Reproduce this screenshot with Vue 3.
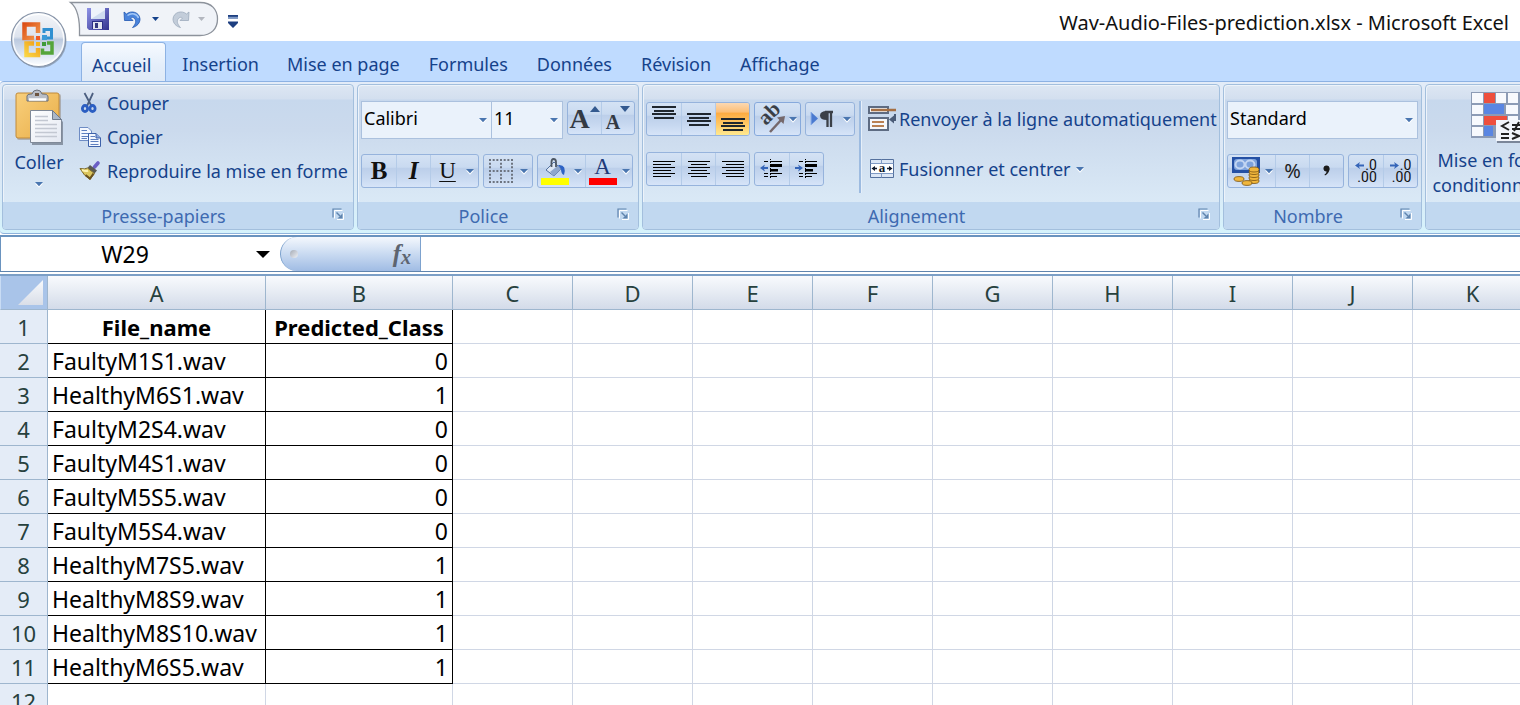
<script setup>
import { ref, h } from 'vue'

const tabs = ['Accueil', 'Insertion', 'Mise en page', 'Formules', 'Données', 'Révision', 'Affichage']
const activeTab = ref('Accueil')
const font = ref('Calibri')
const size = ref('11')
const format = ref('Standard')
const cellRef = ref('W29')
const formula = ref('')

const columns = ['A', 'B', 'C', 'D', 'E', 'F', 'G', 'H', 'I', 'J', 'K']
const emptyColumns = columns.slice(2)
const records = [
  ['FaultyM1S1.wav', 0],
  ['HealthyM6S1.wav', 1],
  ['FaultyM2S4.wav', 0],
  ['FaultyM4S1.wav', 0],
  ['FaultyM5S5.wav', 0],
  ['FaultyM5S4.wav', 0],
  ['HealthyM7S5.wav', 1],
  ['HealthyM8S9.wav', 1],
  ['HealthyM8S10.wav', 1],
  ['HealthyM6S5.wav', 1]
]

const Caret = () =>
  h('svg', { class: 'caret', width: 8, height: 5, viewBox: '0 0 8 5', 'aria-hidden': 'true' }, [
    h('path', { d: 'M0 1.5 H8 L4 5.8Z', fill: '#fff' }),
    h('path', { d: 'M0 0 H8 L4 4.2Z', fill: '#4a76b0' })
  ])

const Launcher = (props) =>
  h('button', { class: 'launcher', type: 'button', 'aria-label': props.label }, [
    h('svg', { width: 12, height: 12, viewBox: '0 0 12 12' }, [
      h('path', { d: 'M2.5 10.5 V2.5 H10.5 M11.5 5 V11.5 H5', stroke: '#fff', fill: 'none' }),
      h('path', { d: 'M1 9.5 V1 H9.5', stroke: '#5f83ad', fill: 'none', 'stroke-width': 1.2 }),
      h('path', { d: 'M4.5 4.5 L8 8', stroke: '#5f83ad', fill: 'none', 'stroke-width': 1.4 }),
      h('path', { d: 'M10.5 5.5 V10.5 H5.5 L8 8Z', fill: '#5f83ad' })
    ])
  ])
Launcher.props = ['label']

const Lines = (props) =>
  h('svg', { width: 26, height: 32, viewBox: '0 0 26 32', 'aria-hidden': 'true' },
    props.rows.map(([x, y, w]) => h('rect', { x, y, width: w, height: props.thick || 1, fill: props.thick ? '#1f262e' : '#000' })))
Lines.props = ['rows', 'thick']

const stackFrom = (top) => [[1, top, 24], [3, top + 4, 20], [1, top + 7, 24], [3, top + 11, 20]]
const vTop = stackFrom(3)
const vMid = stackFrom(10)
const vBottom = stackFrom(15)
const hLeft = [[2, 8, 22], [2, 11, 18], [2, 14, 22], [2, 17, 18], [2, 20, 22], [2, 23, 18]]
const hCenter = [[2, 8, 22], [5, 11, 16], [2, 14, 22], [5, 17, 16], [2, 20, 22], [5, 23, 16]]
const hRight = [[2, 8, 22], [6, 11, 18], [2, 14, 22], [6, 17, 18], [2, 20, 22], [6, 23, 18]]
</script>

<template>
  <div class="excel">
    <header class="titlebar">
      <button class="office" type="button" aria-label="Bouton Office">
        <svg width="58" height="58" viewBox="0 0 58 58">
          <defs>
            <linearGradient id="orb" x1="0" y1="0" x2="0" y2="1">
              <stop offset="0" stop-color="#f4f6fa" />
              <stop offset=".45" stop-color="#dde3ed" />
              <stop offset=".5" stop-color="#bccadf" />
              <stop offset=".8" stop-color="#dfe8f4" />
              <stop offset="1" stop-color="#ffffff" />
            </linearGradient>
            <linearGradient id="or" gradientUnits="userSpaceOnUse" x1="12" y1="11" x2="30" y2="28">
              <stop offset="0" stop-color="#d9440f" /><stop offset="1" stop-color="#f5a050" />
            </linearGradient>
            <linearGradient id="ye" gradientUnits="userSpaceOnUse" x1="14" y1="46" x2="28" y2="30">
              <stop offset="0" stop-color="#fbdc4a" /><stop offset="1" stop-color="#f09a14" />
            </linearGradient>
          </defs>
          <circle cx="29.5" cy="30" r="27" fill="#6f7b8c" opacity=".55" />
          <circle cx="28.5" cy="28.5" r="27" fill="url(#orb)" stroke="#8794a8" stroke-width="1.2" />
          <circle cx="28.5" cy="28.5" r="25.3" fill="none" stroke="#fff" stroke-width="1.4" opacity=".85" />
          <g fill="none">
            <path d="M24 27 H14.500 V13.500 H28 V22" stroke="url(#or)" stroke-width="4.500" />
            <path d="M34 22 V18.500 H41.500 V27 H37" stroke="#2f8fd0" stroke-width="3" />
            <path d="M24 32.500 H16.500 V44 H28 V37" stroke="url(#ye)" stroke-width="4.500" />
            <path d="M37 32 H42 V42 H32.500 V37.500" stroke="#55a53a" stroke-width="3.500" />
          </g>
          <rect x="26" y="25" width="4" height="4" fill="#ef5a24" />
          <rect x="32" y="24" width="5" height="5" fill="#3b9ad8" />
          <rect x="26" y="31" width="4" height="4" fill="#f7b51c" />
          <rect x="32" y="31" width="4" height="4" fill="#3f9a3a" />
        </svg>
      </button>
      <div class="qat">
        <svg class="qat-shape" width="149" height="37" viewBox="0 0 149 37" aria-hidden="true">
          <path d="M.5 2.500 H130 C142 2.500 147.500 10 147.500 19 C147.500 28 142 35.500 130 35.500 H9.500 C10 20 8 8 .5 2.500Z" fill="#f0f3f8" stroke="#8d939c" stroke-width="1.300" />
        </svg>
        <button class="plain" type="button" aria-label="Enregistrer">
          <svg width="22" height="22" viewBox="0 0 22 22">
            <defs><linearGradient id="fl" x1="0" y1="0" x2="1" y2="1"><stop offset="0" stop-color="#8f93e6" /><stop offset="1" stop-color="#33338f" /></linearGradient></defs>
            <path d="M0 0 H22 V22 H2 L0 20Z" fill="url(#fl)" />
            <rect x="4" y="0" width="14" height="11" fill="#eef3fb" />
            <path d="M4 11 L18 2 V11Z" fill="#cfdcf0" />
            <rect x="5" y="13" width="11" height="8" fill="#2c2f86" />
            <rect x="6" y="14" width="9" height="7" fill="#e3e6f1" />
            <rect x="8" y="15" width="3" height="5" fill="#34387f" />
          </svg>
        </button>
        <button class="plain undo" type="button" aria-label="Annuler">
          <svg width="18" height="18" viewBox="0 0 18 18">
            <path d="M1 2 L3.500 4 C8 0 16.500 2 17 9 C17 13 14 16.500 9.500 17.500 C13 14 13.500 10.500 11.500 8.500 C10 7 8.500 7 7.500 8 L10 10.500 L1.500 10.500Z" fill="#4a84dc" stroke="#1f55b0" stroke-width=".8" />
            <path d="M4.500 5.500 C8.500 2.500 14 3.500 15.500 8" fill="none" stroke="#a4c8f6" stroke-width="1.500" />
          </svg>
        </button>
        <button class="plain" type="button" aria-label="Liste des annulations">
          <svg width="7" height="4" viewBox="0 0 7 4"><path d="M0 0 H7 L3.500 4Z" fill="#15428b" /></svg>
        </button>
        <button class="plain redo" type="button" aria-label="Rétablir">
          <svg width="18" height="18" viewBox="0 0 18 18">
            <path d="M17 2 L14.500 4 C10 0 1.500 2 1 9 C1 13 4 16.500 8.500 17.500 C5 14 4.500 10.500 6.500 8.500 C8 7 9.500 7 10.500 8 L8 10.500 L16.500 10.500Z" fill="#c3cdda" stroke="#9dabbd" stroke-width=".8" />
          </svg>
        </button>
        <button class="plain" type="button" aria-label="Liste des rétablissements">
          <svg width="7" height="4" viewBox="0 0 7 4"><path d="M0 0 H7 L3.500 4Z" fill="#b3b7bf" /></svg>
        </button>
        <button class="plain customize" type="button" aria-label="Personnaliser la barre d'outils">
          <svg width="10" height="13" viewBox="0 0 10 13"><path d="M0 0 H10 V3.500 H0Z M0 6.500 H10 V8 L5 13 L0 8Z" fill="#1e3f80" /><path d="M0 1.800 H10 V3.500 H0Z" fill="#7d99c6" /></svg>
        </button>
      </div>
      <h1>Wav-Audio-Files-prediction.xlsx - Microsoft Excel</h1>
    </header>

    <nav class="tabs" aria-label="Ruban">
      <button v-for="t in tabs" :key="t" type="button" class="tab" :class="{ active: t === activeTab }" @click="activeTab = t">{{ t }}</button>
    </nav>

    <div class="ribbon">
      <section class="group clipboard" aria-label="Presse-papiers">
        <div class="body">
          <button class="plain paste" type="button">
            <svg width="52" height="56" viewBox="-2 0 52 56">
              <defs>
                <linearGradient id="cb" x1="0" y1="0" x2="1" y2="1"><stop offset="0" stop-color="#f8cf7c" /><stop offset="1" stop-color="#e9ae48" /></linearGradient>
                <linearGradient id="pg" x1="0" y1="0" x2="1" y2="1"><stop offset="0" stop-color="#fff" /><stop offset="1" stop-color="#e3e8f2" /></linearGradient>
              </defs>
              <rect x="2" y="5" width="44" height="46" rx="2" fill="#8a7a68" opacity=".45" />
              <rect x="1" y="4" width="43" height="45" rx="2" fill="url(#cb)" stroke="#c08a3a" />
              <path d="M12 12 V7 Q12 5 16 5 H17 Q18 1 22 1 Q26 1 27 5 H28 Q33 5 33 8 V12Z" fill="#b9bec7" stroke="#6a6e77" />
              <path d="M14 10.500 H31" stroke="#fff" stroke-width="2.500" />
              <rect x="20" y="4" width="4" height="3" fill="#6c5540" />
              <path d="M17 24 H40 L48 33 V56 H17Z" fill="#6c7686" opacity=".7" />
              <path d="M15.500 21.500 H37.500 L46.500 30.500 V53.500 H15.500Z" fill="url(#pg)" stroke="#7f8998" />
              <path d="M37.500 21.500 L46.500 30.500 H37.500Z" fill="#aab7c9" stroke="#6f7b8d" />
              <path d="M20 27.500 H33 M20 31.500 H33 M20 35.500 H42 M20 39.500 H42 M20 43.500 H42 M20 47.500 H42" stroke="#c3c8d2" stroke-width="1.500" />
            </svg>
            <span>Coller</span>
            <Caret />
          </button>
          <div class="stack">
            <button class="plain item" type="button">
              <svg width="22" height="22" viewBox="0 0 22 22">
                <path d="M5.500 1 L12.500 14 M14 1 L8 14" stroke="#4c5f80" stroke-width="1.800" fill="none" />
                <ellipse cx="6" cy="16.500" rx="2.600" ry="3" fill="none" stroke="#2b5ec2" stroke-width="2.800" />
                <ellipse cx="13.500" cy="16.500" rx="2.600" ry="3" fill="none" stroke="#2b5ec2" stroke-width="2.800" />
              </svg>Couper
            </button>
            <button class="plain item" type="button">
              <svg width="22" height="22" viewBox="0 0 22 22">
                <path d="M.5 1.500 H9 L12.500 5 V14.500 H.5Z" fill="#f4f8ff" stroke="#6e8cc4" />
                <path d="M2.500 4.500 H8 M2.500 7.500 H10 M2.500 10.500 H9 M2.500 12.500 H8" stroke="#5e7fbf" />
                <path d="M9.500 7.500 H17 L21.500 12 V20.500 H9.500Z" fill="#f4f8ff" stroke="#3e62aa" />
                <path d="M17 7.500 V12 H21.500" fill="#8ba6dc" stroke="#3e62aa" />
                <path d="M11.500 10.500 H16 M11.500 13.500 H19.500 M11.500 15.500 H19.500 M11.500 18.500 H19.500" stroke="#5e7fbf" />
              </svg>Copier
            </button>
            <button class="plain item" type="button">
              <svg width="22" height="22" viewBox="0 0 22 22">
                <path d="M19 3 L15.500 7" stroke="#6b5fc4" stroke-width="3.600" stroke-linecap="round" />
                <path d="M11 5 L18 10.500 L15.500 13.500 L8.500 8Z" fill="#5a5a50" />
                <path d="M1 8.500 Q6 9.500 8.500 8 L15.500 13.500 L11 19.500 Q5 16 1 8.500Z" fill="#dcc65c" stroke="#7d6a2a" />
                <path d="M3 10 Q7 11.500 9 10.500" stroke="#fdf3b0" stroke-width="2" fill="none" />
                <path d="M6.500 15 L11 18.500 L14.500 13.500" stroke="#6a5220" stroke-width="2" fill="none" />
              </svg>Reproduire la mise en forme
            </button>
          </div>
        </div>
        <footer><span>Presse-papiers</span><Launcher label="Options du Presse-papiers" /></footer>
      </section>

      <section class="group fonts" aria-label="Police">
        <div class="body rows">
          <div class="row">
            <div class="combos">
              <div class="combo family"><select v-model="font" aria-label="Police"><option>Calibri</option></select><Caret /></div>
              <div class="combo size"><select v-model="size" aria-label="Taille de police"><option>11</option></select><Caret /></div>
            </div>
            <div class="set grow">
              <button type="button" aria-label="Agrandir la police"><span class="glyph big">A</span><svg class="mark" width="10" height="6" viewBox="0 0 10 6"><path d="M0 6 H10 L5 0Z" fill="#33598f" /></svg></button>
              <button type="button" aria-label="Réduire la police"><span class="glyph small">A</span><svg class="mark" width="10" height="6" viewBox="0 0 10 6"><path d="M0 0 H10 L5 6Z" fill="#33598f" /></svg></button>
            </div>
          </div>
          <div class="row">
            <div class="set">
              <button type="button" aria-label="Gras"><span class="glyph bold">B</span></button>
              <button type="button" aria-label="Italique"><span class="glyph italic">I</span></button>
              <button type="button" aria-label="Souligné" class="wide underline"><span class="glyph under">U</span><Caret /></button>
            </div>
            <div class="set">
              <button type="button" aria-label="Bordures" class="wide borders">
                <svg width="24" height="24" viewBox="0 0 24 24"><path d="M0 1 H24 M0 23 H24 M0 12 H24 M1 0 V24 M23 0 V24 M12 0 V24" stroke="#6d7480" stroke-width="2" stroke-dasharray="2 1.670" fill="none" /></svg><Caret />
              </button>
            </div>
            <div class="set">
              <button type="button" aria-label="Couleur de remplissage" class="wide colour">
                <svg width="28" height="28" viewBox="0 0 28 28">
                  <path d="M5 13 L13 5 L20 12 L13 19Z" fill="#dce6f4" stroke="#53719f" />
                  <path d="M9 15 L17 8.500 L20 12 L13 19Z" fill="#8ea6cc" />
                  <path d="M10.500 10 V5 Q10.500 2 12.500 2 Q15 2 15 5 V10" fill="none" stroke="#4c5663" stroke-width="1.800" />
                  <path d="M17 8 Q26 7 23 18 Q20 17 20 12Z" fill="#2d62c4" />
                  <rect x="0" y="21" width="28" height="7" fill="#ff0" />
                </svg><Caret />
              </button>
              <button type="button" aria-label="Couleur de police" class="wide colour">
                <span class="color-a">A</span><Caret />
              </button>
            </div>
          </div>
        </div>
        <footer><span>Police</span><Launcher label="Options de police" /></footer>
      </section>

      <section class="group align" aria-label="Alignement">
        <div class="body">
          <div class="rows">
            <div class="row">
              <div class="set">
                <button type="button" aria-label="Aligner en haut"><Lines :rows="vTop" :thick="2" /></button>
                <button type="button" aria-label="Aligner au centre verticalement"><Lines :rows="vMid" :thick="2" /></button>
                <button type="button" aria-label="Aligner en bas" class="on"><Lines :rows="vBottom" :thick="2" /></button>
              </div>
              <div class="set strong">
                <button type="button" aria-label="Orientation" class="wide">
                  <svg width="28" height="28" viewBox="0 0 28 28">
                    <text x="8" y="21" transform="rotate(-45 8 21)" font-family="Liberation Serif, serif" font-weight="bold" font-size="21" fill="#3a3f47">ab</text>
                    <path d="M12 27 L24 14" stroke="#75686b" stroke-width="2.500" /><path d="M27 11 L19 12.500 L25.500 19Z" fill="#75686b" />
                  </svg><Caret />
                </button>
              </div>
              <div class="set dir">
                <button type="button" aria-label="Sens du texte" class="wide">
                  <svg width="24" height="20" viewBox="0 0 24 20">
                    <path d="M1 3 L8 9.500 L1 16Z" fill="#4a7ad0" /><path d="M1 3 V16" stroke="#8db0ea" />
                    <path d="M15 3 H23 M17.500 3 V18 M21 3 V18" stroke="#3b4048" stroke-width="2.300" /><path d="M17 2 Q10 2 10 6.500 Q10 11 17 11Z" fill="#3b4048" />
                  </svg><Caret />
                </button>
              </div>
            </div>
            <div class="row">
              <div class="set">
                <button type="button" aria-label="Aligner à gauche"><Lines :rows="hLeft" /></button>
                <button type="button" aria-label="Centrer"><Lines :rows="hCenter" /></button>
                <button type="button" aria-label="Aligner à droite"><Lines :rows="hRight" /></button>
              </div>
              <div class="set">
                <button type="button" aria-label="Diminuer le retrait">
                  <svg width="24" height="20" viewBox="0 0 24 20">
                    <path d="M4 2.500 H8 M10 2.500 H22 M4 14.500 H8 M4 17.500 H8 M10 14.500 H22 M10 17.500 H17" stroke="#000" />
                    <path d="M10 5 H22 V8 H10Z M10 10 H18 V12.500 H10Z" fill="#000" />
                    <path d="M10.500 0 V20" stroke="#000" stroke-dasharray="1 2" /><path d="M0 9 L5 5.500 L4 8 H8 V10 H4 L5 12.500Z" fill="#3565b8" />
                  </svg>
                </button>
                <button type="button" aria-label="Augmenter le retrait">
                  <svg width="24" height="20" viewBox="0 0 24 20">
                    <path d="M4 2.500 H8 M10 2.500 H22 M4 14.500 H8 M4 17.500 H8 M10 14.500 H22 M10 17.500 H17" stroke="#000" />
                    <path d="M10 5 H22 V8 H10Z M10 10 H18 V12.500 H10Z" fill="#000" />
                    <path d="M10.500 0 V20" stroke="#000" stroke-dasharray="1 2" /><path d="M8 9 L3 5.500 L4 8 H0 V10 H4 L3 12.500Z" fill="#3565b8" />
                  </svg>
                </button>
              </div>
            </div>
          </div>
          <div class="wraps">
            <button class="plain item wrap" type="button">
              <svg width="28" height="28" viewBox="0 0 28 28">
                <path d="M1 2 H20 V8 H1Z" fill="#f5f7fb" stroke="#5d6b82" stroke-width="2" /><path d="M3 5 H28" stroke="#a56f43" stroke-width="2.400" />
                <path d="M1 13 H20 V25 H1Z" fill="#f5f7fb" stroke="#5d6b82" stroke-width="2" /><path d="M4 17 H16 M4 21 H16" stroke="#b98053" stroke-width="2" />
                <path d="M27 9 V15 H24" fill="none" stroke="#4b5c78" stroke-width="2" /><path d="M21 14.500 L26 10.500 V18.500Z" fill="#4b5c78" />
              </svg>Renvoyer à la ligne automatiquement
            </button>
            <button class="plain item" type="button">
              <svg width="24" height="20" viewBox="0 0 24 20">
                <path d="M.5 .5 H23.500 V18.500 H.5Z" fill="#dce7f6" stroke="#55719e" />
                <path d="M11.500 .5 V4.500 M11.500 14.500 V18.500 M.5 4.500 H23.500 M.5 14.500 H23.500" stroke="#7f9ac4" />
                <rect x="1" y="5" width="22" height="9" fill="#fff" />
                <path d="M3 9.500 H7 M17 9.500 H21" stroke="#10182a" stroke-width="1.400" /><path d="M1.500 9.500 L5 7 V12Z M22.500 9.500 L19 7 V12Z" fill="#10182a" />
                <text x="12" y="13" text-anchor="middle" font-family="Liberation Serif, serif" font-weight="bold" font-size="13" fill="#10182a">a</text>
              </svg>Fusionner et centrer<Caret />
            </button>
          </div>
        </div>
        <footer><span>Alignement</span><Launcher label="Options d'alignement" /></footer>
      </section>

      <section class="group number" aria-label="Nombre">
        <div class="body rows">
          <div class="row">
            <div class="combo"><select v-model="format" aria-label="Format de nombre"><option>Standard</option></select><Caret /></div>
          </div>
          <div class="row">
            <div class="set">
              <button type="button" aria-label="Format Nombre Comptabilité" class="wide money">
                <svg width="30" height="30" viewBox="0 0 30 30">
                  <rect x="1" y="1" width="28" height="16" fill="#2450a4" />
                  <rect x="3" y="3" width="23" height="11" rx="3" fill="#7da2dc" />
                  <ellipse cx="9" cy="8.500" rx="4.500" ry="4" fill="none" stroke="#c2d5f2" stroke-width="2" /><ellipse cx="19" cy="8.500" rx="4.500" ry="4" fill="none" stroke="#c2d5f2" stroke-width="2" />
                  <g fill="#f0b63c" stroke="#7a5312" stroke-width=".8">
                    <ellipse cx="23" cy="25" rx="5" ry="2.500" /><ellipse cx="23" cy="22" rx="5" ry="2.500" /><ellipse cx="23" cy="19" rx="5" ry="2.500" /><ellipse cx="23" cy="16" rx="5" ry="2.500" /><ellipse cx="23" cy="13.500" rx="5" ry="2.500" />
                    <ellipse cx="8" cy="23" rx="5" ry="2.400" /><ellipse cx="16" cy="27" rx="5" ry="2.400" />
                  </g>
                </svg><Caret />
              </button>
              <button type="button" aria-label="Style de pourcentage"><span class="percent">%</span></button>
              <button type="button" aria-label="Séparateur de milliers">
                <svg width="10" height="12" viewBox="0 0 10 12"><circle cx="4.500" cy="3.500" r="3" fill="#1c1c1c" /><path d="M7.500 3.500 Q7.500 8 3 10.500 L2.500 9.500 Q5 8 4.500 5Z" fill="#1c1c1c" /></svg>
              </button>
            </div>
            <div class="set">
              <button type="button" aria-label="Ajouter une décimale"><span class="dec"><span><svg width="9" height="7" viewBox="0 0 9 7"><path d="M0 3.500 L5 0 L4 2.500 H9 V4.500 H4 L5 7Z" fill="#3565b8" /></svg>.0</span><span>.00</span></span></button>
              <button type="button" aria-label="Réduire les décimales"><span class="dec"><span><svg width="9" height="7" viewBox="0 0 9 7"><path d="M9 3.500 L4 0 L5 2.500 H0 V4.500 H5 L4 7Z" fill="#3565b8" /></svg>.0</span><span>.00</span></span></button>
            </div>
          </div>
        </div>
        <footer><span>Nombre</span><Launcher label="Options de nombre" /></footer>
      </section>

      <section class="group styles" aria-label="Style">
        <div class="body">
          <button class="plain conditional" type="button">
            <svg width="56" height="52" viewBox="0 0 56 52">
              <rect x="0" y="0" width="54" height="46" fill="#8c9bb5" />
              <g fill="#f7f9fd"><path d="M1 1 H12 V11 H1Z M1 13 H12 V22 H1Z M1 24 H12 V33 H1Z M1 35 H12 V44 H1Z M25 1 H35 V11 H25Z M37 1 H47 V11 H37Z M35 13 H47 V22 H35Z M37 24 H47 V33 H37Z M25 35 H35 V44 H25Z" /></g>
              <path d="M13 1 H24 V11 H13Z M13 24 H36 V33 H13Z" fill="#ee4f3d" /><path d="M13 12 H33 V22 H13Z M13 34 H22 V44 H13Z" fill="#5a86e2" />
              <rect x="26" y="29" width="29" height="22" fill="#7b8699" /><rect x="25" y="28" width="29" height="21" fill="#f2f5fb" />
              <path d="M38 30 L31 34 L38 38 M30 42 H38 M30 46 H38 M41 33 H50 M41 37 H50 M48 30 L43 39 M41 41 L48 44 L41 47" fill="none" stroke="#222" stroke-width="2" />
            </svg>
            <span class="first">Mise en forme</span>
            <span class="second">conditionnelle<Caret /></span>
          </button>
        </div>
        <footer></footer>
      </section>
    </div>

    <div class="formula-bar">
      <div class="namebox">
        <input v-model="cellRef" aria-label="Zone Nom" />
        <button class="plain" type="button" aria-label="Liste des noms"><svg width="14" height="7" viewBox="0 0 14 7"><path d="M0 0 H14 L7 7Z" fill="#000" /></svg></button>
      </div>
      <div class="fx">
        <span class="dot"></span>
        <button class="plain" type="button" aria-label="Insérer une fonction">f<sub>x</sub></button>
      </div>
      <input v-model="formula" class="formula" aria-label="Barre de formule" />
    </div>

    <main class="sheet">
      <table>
        <colgroup><col class="c-row" /><col class="c-a" /><col class="c-b" /><col v-for="c in emptyColumns" :key="c" class="c-n" /></colgroup>
        <thead>
          <tr>
            <th class="corner"><svg width="25" height="25" viewBox="0 0 25 25" aria-hidden="true"><defs><linearGradient id="tri" x1="0" y1="0" x2="0" y2="1"><stop offset="0" stop-color="#f7f9fc" /><stop offset="1" stop-color="#d9dee8" /></linearGradient></defs><path d="M25 0 V25 H0Z" fill="url(#tri)" /></svg></th>
            <th v-for="c in columns" :key="c" scope="col">{{ c }}</th>
          </tr>
        </thead>
        <tbody>
          <tr>
            <th scope="row">1</th><td class="data head">File_name</td><td class="data head">Predicted_Class</td><td v-for="c in emptyColumns" :key="c"></td>
          </tr>
          <tr v-for="(r, i) in records" :key="i">
            <th scope="row">{{ i + 2 }}</th><td class="data">{{ r[0] }}</td><td class="data num">{{ r[1] }}</td><td v-for="c in emptyColumns" :key="c"></td>
          </tr>
          <tr>
            <th scope="row">12</th><td v-for="c in columns" :key="c"></td>
          </tr>
        </tbody>
      </table>
    </main>
  </div>
</template>

<style>
body { margin: 0; overflow: hidden; background: #fff; }
</style>

<style scoped>
.excel {
  height: 100vh;
  overflow: hidden;
  display: flex;
  flex-direction: column;
  font-family: "Noto Sans", "Open Sans", sans-serif;
  font-size: 18px;
  line-height: 24px;
  color: #15428b;
}
button, select, input { font: inherit; color: inherit; margin: 0; padding: 0; border: 0; border-radius: 0; background: none; box-sizing: border-box; }
svg { display: block; flex: none; overflow: visible; }

.titlebar { position: relative; z-index: 2; flex: none; height: 41px; display: flex; align-items: center; padding-right: 11px; background: #fff; }
.titlebar h1 { flex: 1; margin: 0; padding-top: 4px; text-align: right; font-size: 20px; line-height: 28px; font-weight: 400; color: #111; white-space: nowrap; }
.office { position: absolute; left: 10px; top: 11px; border-radius: 50%; }
.qat { position: relative; align-self: flex-start; height: 38px; padding-left: 87px; display: flex; align-items: center; }
.qat-shape { position: absolute; left: 70px; top: 0; }
.qat button { position: relative; }
.undo { margin: 0 11px 0 14px; }
.redo { margin: 0 8px 0 13px; }
.customize { margin-left: 23px; padding-top: 4px; }

.tabs { flex: none; height: 40px; display: flex; align-items: flex-end; padding-left: 81px; background: #bfdbff; }
.tab { height: 39px; padding: 7px 14px 2px 14px; line-height: 24px; }
.tab:nth-child(n + 3) { padding-right: 15px; padding-left: 14px; }
.tab.active { margin-right: 2px; padding: 7px 14px 2px 10px; border: 1px solid #8db2e3; border-bottom: 0; border-radius: 4px 4px 0 0; background: linear-gradient(#f6faff, #e4eefa 60%, #dfeaf7); }

.ribbon { flex: none; display: flex; gap: 3px; padding: 2px 0 3px 2px; height: 146px; border-top: 1px solid #8db2e3; border-bottom: 1px solid #8fb3dc; border-radius: 4px 0 0 4px; background: linear-gradient(#e3ecf8, #dbe7f5 60%, #d6f3fc); overflow: hidden; }
.group { flex: none; display: flex; flex-direction: column; border: 1px solid #a3bfdd; border-radius: 4px; box-shadow: inset 1px 1px 0 #edf3fa; overflow: hidden; background: linear-gradient(#dde7f3 0, #d3dfef 14px, #c7d8ed 15px, #cbdaed 45px, #dae9f6 118px); }
.clipboard { width: 350px; }
.fonts { width: 280px; }
.align { width: 576px; }
.number { width: 197px; }
.styles { width: 240px; }
.body { flex: 1; display: flex; min-height: 0; }
.group footer { flex: none; height: 27px; display: flex; align-items: center; background: #c1d8f0; color: #3e6ab0; }
.group footer span { flex: 1; text-align: center; padding-right: 8px; }
.launcher { margin: 0 9px 6px 0; }

.paste { width: 72px; display: flex; flex-direction: column; align-items: center; padding-top: 4px; }
.paste span { padding-top: 3px; line-height: 28px; }
.paste .caret { margin-top: 6px; }
.stack { display: flex; flex-direction: column; gap: 10px; padding: 6px 0 0 4px; }
.item { display: flex; align-items: center; gap: 6px; height: 24px; white-space: nowrap; }

.rows { display: flex; flex-direction: column; gap: 15px; padding: 16px 0 0 3px; }
.row { display: flex; gap: 4px; }
.combos { display: flex; }
.combo { display: grid; align-items: center; height: 38px; border: 1px solid #abc1de; background: #eaf2fb; box-sizing: border-box; color: #000; }
.combo > * { grid-area: 1 / 1; }
.combo select { appearance: none; width: 100%; height: 36px; padding: 0 20px 4px 2px; }
.combo .caret { justify-self: end; margin-right: 4px; pointer-events: none; }
.family { width: 131px; }
.size { width: 72px; margin-left: -1px; }
.number .combo { width: 191px; }

.set { display: flex; height: 34px; box-sizing: border-box; border: 1px solid #96b3dc; border-radius: 3px; overflow: hidden; background: linear-gradient(#d4e2f4 0, #c9daf0 38%, #bccfea 42%, #c7d8f0 70%, #d6e4f8); }
.set button { width: 34px; display: flex; align-items: center; justify-content: center; }
.set button + button { border-left: 1px solid #b4cbe8; }
.set .wide { width: 47px; gap: 5px; }
.set .underline { width: 48px; gap: 10px; padding-left: 4px; }
.set .borders { width: 48px; gap: 7px; }
.set .colour { width: 47px; }
.set.strong { border-color: #86a9dc; }
.strong .wide { width: 45px; gap: 3px; }
.dir .wide { gap: 9px; width: 48px; }
.set .money { gap: 4px; }
.set .on { background: linear-gradient(#fbd8b2 0, #fdbf77 28%, #fdab42 32%, #ffc764 65%, #ffe98f); }
.glyph { font-family: "Liberation Serif", serif; color: #333a44; }
.set.grow button { width: 33px; }
.grow .big { font-size: 28px; font-weight: 700; padding-top: 2px; }
.grow .small { font-size: 20px; font-weight: 700; padding-top: 8px; }
.grow .mark { align-self: flex-start; margin-top: 4px; }
.bold { font-size: 25px; font-weight: 700; color: #111; }
.italic { font-size: 25px; font-weight: 700; font-style: italic; color: #111; }
.under { font-size: 23px; text-decoration: underline; text-decoration-thickness: 1px; text-underline-offset: 3px; color: #111; }
.color-a { width: 28px; height: 28px; display: flex; justify-content: center; align-items: flex-start; box-sizing: border-box; border-bottom: 7px solid #f00; font-family: "Liberation Serif", serif; font-size: 23px; line-height: 20px; color: #1f3a78; }

.align .rows { padding-top: 17px; gap: 16px; }
.wraps { align-self: flex-start; margin: 16px 0 0 4px; padding: 6px 0 12px 7px; border-left: 2px solid #9dbbe0; display: flex; flex-direction: column; gap: 26px; box-shadow: inset 1px 0 0 #e6eff9; }
.wraps .item { gap: 5px; padding-left: 2px; }
.wraps .wrap { gap: 3px; padding-left: 0; }

.percent { font-size: 20px; color: #222; }
.dec { display: flex; flex-direction: column; align-items: flex-end; font-family: Roboto, sans-serif; font-size: 14px; line-height: 12px; color: #111; }
.dec > span { display: flex; align-items: center; gap: 1px; }

.conditional { display: flex; flex-direction: column; align-items: center; padding: 7px 0 0 0; width: 145px; line-height: 25px; }
.first { padding-top: 4px; }
.second { display: flex; align-items: center; gap: 4px; }

.formula-bar { flex: none; display: flex; height: 37px; box-sizing: border-box; border-top: 2px solid #6a93bf; border-bottom: 1px solid #5f84ad; background: #fff; color: #000; margin-top: 1px; }
.namebox { width: 280px; display: flex; align-items: center; box-sizing: border-box; padding-right: 10px; border-left: 1px solid #6a93bf; }
.namebox input { flex: 1; min-width: 0; text-align: center; font-size: 23px; height: 34px; padding-right: 7px; }
.fx { width: 141px; display: flex; align-items: center; justify-content: space-between; box-sizing: border-box; padding: 0 9px; border: 1px solid #7da2ce; border-width: 0 1px 0 1px; border-radius: 17px 0 0 17px; background: linear-gradient(#f4f8fd, #c9daf1 50%, #a0bce4); }
.fx .dot { width: 8px; height: 8px; border-radius: 50%; background: linear-gradient(135deg, #a5abb5, #eef1f6); }
.fx button { font-family: "Liberation Serif", serif; font-style: italic; font-weight: 700; font-size: 25px; color: #5d6470; }
.fx sub { font-size: 20px; line-height: 20px; vertical-align: -2px; }
.formula { flex: 1; min-width: 0; padding: 0 6px; font-size: 23px; }
input:focus { outline: 0; }

.sheet { flex: 1; min-height: 0; overflow: hidden; margin-top: 2px; border-top: 2px solid #7c9fc6; }
table { table-layout: fixed; width: 1533px; min-width: 100%; border-collapse: separate; border-spacing: 0; font-size: 23px; line-height: 30px; color: #000; }
.c-row { width: 48px; }
.c-a { width: 218px; }
.c-b { width: 187px; }
.c-n { width: 120px; }
th, td { box-sizing: border-box; height: 34px; padding: 2px 4px 1px; border-right: 1px solid #d0d7e5; border-bottom: 1px solid #d0d7e5; white-space: nowrap; }
th { font-weight: 400; font-size: 22px; color: #27413e; border-color: #9eb6ce; padding-left: 0; padding-right: 0; }
thead th { background: linear-gradient(#f8fafd, #e6ebf3 50%, #d3dbe9); }
tbody th { background: #e4ecf7; }
thead .corner { background: #a9c4e9; border-left: 1px solid #c9dcf4; padding: 4px 3px 4px 17px; }
.data { border-color: #000; }
.head { font-size: 22px; font-weight: 700; text-align: center; }
.num { text-align: right; }
</style>
